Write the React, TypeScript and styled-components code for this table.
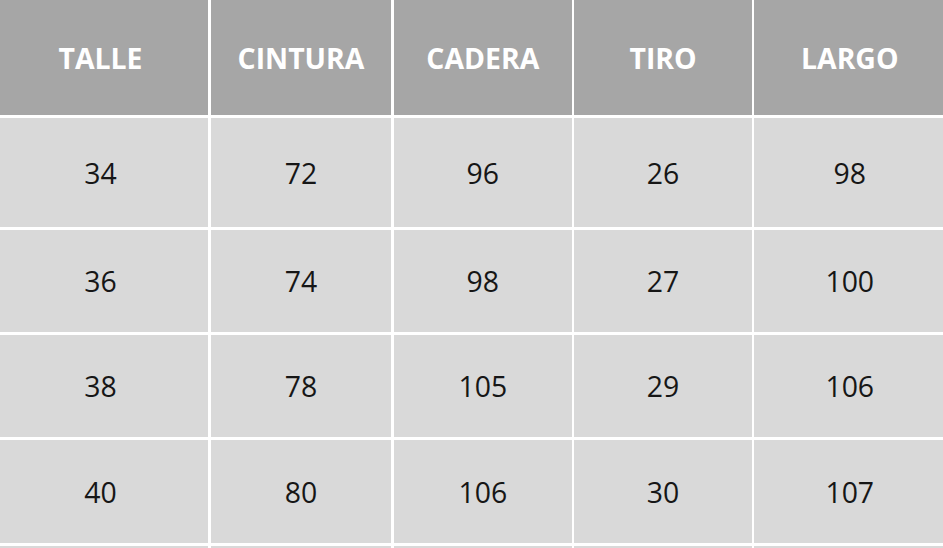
import styled, { createGlobalStyle } from 'styled-components';

const GlobalStyle = createGlobalStyle`
  html, body {
    margin: 0;
    padding: 0;
    background: #ffffff;
    overflow: hidden;
  }
  body {
    font-family: "Open Sans", "Liberation Sans", sans-serif;
  }
`;

// size chart: header + rows, white gaps act as borders
// (the table is a little wider than the window, cut on both sides)
const SizeTable = styled.div`
  display: grid;
  grid-template-columns: 215px 180.6px 177.7px 177.4px 190.7px;
  grid-template-rows: 115px 109px 101.6px 102.6px 103.3px 100px;
  column-gap: 2.7px;
  row-gap: 3px;
  margin-left: -7px;
  background: #ffffff;
`;

const HeadCell = styled.div`
  display: flex;
  align-items: center;
  justify-content: center;
  background: #a6a6a6;
  color: #ffffff;
  font-weight: 700;
  font-size: 28.4px;
  text-transform: uppercase;
`;

const Cell = styled.div`
  display: flex;
  align-items: center;
  justify-content: center;
  background: #d9d9d9;
  color: #161616;
  font-size: 28.4px;
  font-weight: 400;
`;

const headers = ['Talle', 'Cintura', 'Cadera', 'Tiro', 'Largo'];

const rows: (number | null)[][] = [
  [34, 72, 96, 26, 98],
  [36, 74, 98, 27, 100],
  [38, 78, 105, 29, 106],
  [40, 80, 106, 30, 107],
  // next row only peeks in at the bottom edge
  [null, null, null, null, null],
];

function App() {
  return (
    <>
      <GlobalStyle />
      <SizeTable>
        {headers.map((h) => (
          <HeadCell key={h}>{h}</HeadCell>
        ))}
        {rows.map((row, i) =>
          row.map((v, j) => <Cell key={`${i}-${j}`}>{v}</Cell>)
        )}
      </SizeTable>
    </>
  );
}

export default App;
